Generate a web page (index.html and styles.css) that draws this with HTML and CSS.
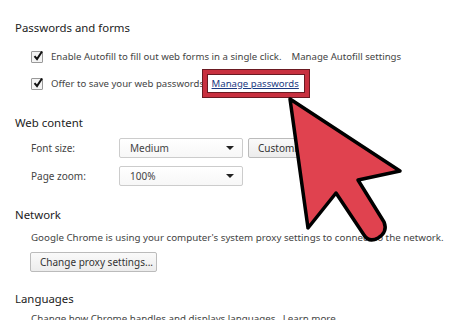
FILE: index.html
```html
<!DOCTYPE html>
<html>
<head>
<meta charset="utf-8">
<link rel="stylesheet" href="styles.css">
</head>
<body>
<div class="page">
  <section class="sec sec-pw">
    <h2>Passwords and forms</h2>
    <div class="row check-row">
      <span class="cb"><svg viewBox="0 0 12 12" width="12" height="12"><path d="M2.5 6.2 L5 9 L10 1.5" fill="none" stroke="#111" stroke-width="2"/></svg></span>
      <span>Enable Autofill to fill out web forms in a single click.</span>
      <span class="plain-link">Manage Autofill settings</span>
    </div>
    <div class="row check-row">
      <span class="cb"><svg viewBox="0 0 12 12" width="12" height="12"><path d="M2.5 6.2 L5 9 L10 1.5" fill="none" stroke="#111" stroke-width="2"/></svg></span>
      <span>Offer to save your web passwords.</span>
      <span class="hl"><a class="link">Manage passwords</a></span>
    </div>
  </section>

  <section class="sec sec-web">
    <h2>Web content</h2>
    <div class="row field-row">
      <span class="label">Font size:</span>
      <span class="select"><span>Medium</span><span class="caret"></span></span>
      <span class="btn btn-cust">Customize fonts...</span>
    </div>
    <div class="row field-row">
      <span class="label">Page zoom:</span>
      <span class="select"><span>100%</span><span class="caret"></span></span>
    </div>
  </section>

  <section class="sec sec-net">
    <h2>Network</h2>
    <p class="desc">Google Chrome is using your computer's system proxy settings to connect to the network.</p>
    <span class="btn btn-proxy">Change proxy settings...</span>
  </section>

  <section class="sec sec-lang">
    <h2>Languages</h2>
    <p class="desc">Change how Chrome handles and displays languages. <span class="plain-link">Learn more</span></p>
  </section>

  <svg class="arrow" width="460" height="320" viewBox="0 0 460 320">
    <path d="M290 99 L400 171 L358 180 L384 222 Q388 232 378 238 Q369 243 364 235 L336 193 L308 228 Z" fill="#e0424f" stroke="#000" stroke-width="3.5" stroke-linejoin="round"/>
  </svg>
</div>
</body>
</html>
```
FILE: styles.css
```css
html, body {
  margin: 0;
  padding: 0;
  background: #fff;
}
.page {
  position: relative;
  width: 460px;
  height: 320px;
  overflow: hidden;
  font-family: "Noto Sans", "Open Sans", sans-serif;
  font-size: 10px;
  color: #444;
  padding: 18px 0 0 15px;
  box-sizing: border-box;
}
h2 {
  margin: 0;
  font-size: 11.4px;
  font-weight: normal;
  line-height: 20px;
  color: #222;
}
.sec-pw h2 { margin-bottom: 5px; }
.row {
  display: flex;
  align-items: center;
  padding-left: 16px;
}
.check-row {
  height: 27px;
  gap: 6px;
  font-size: 9.6px;
}
.cb {
  width: 10px;
  height: 10px;
  border: 1px solid #999;
  border-radius: 1px;
  background: #f4f4f4;
  position: relative;
  margin-right: 2px;
  flex: none;
}
.cb svg {
  position: absolute;
  left: 0;
  top: -2px;
}
.plain-link { margin-left: 4px; }
.hl {
  margin-left: -10px;
  padding: 3px 6px 3px 5px;
  border: 4px solid #c8303f;
  box-shadow: 0 0 0 1px #6a1a22, inset 0 0 0 1px #6a1a22;
  background: #fff;
}
.link {
  color: #1b3a82;
  text-decoration: underline;
}
.sec-web { margin-top: 16px; }
.sec-web h2 { margin-bottom: 1px; }
.field-row {
  height: 28px;
}
.label {
  width: 88px;
  flex: none;
}
.select {
  width: 124px;
  height: 20px;
  box-sizing: border-box;
  border: 1px solid #ccc;
  border-radius: 2px;
  display: flex;
  align-items: center;
  justify-content: space-between;
  padding: 0 8px 0 10px;
  background: linear-gradient(#fff, #f7f7f7);
}
.caret {
  width: 0;
  height: 0;
  border-left: 4px solid transparent;
  border-right: 4px solid transparent;
  border-top: 4px solid #222;
}
.btn {
  display: inline-flex;
  align-items: center;
  height: 20px;
  box-sizing: border-box;
  border: 1px solid #bbb;
  border-radius: 2px;
  background: linear-gradient(#fafafa, #ececec);
  padding: 0 9px;
  color: #333;
  white-space: nowrap;
}
.btn-cust { margin-left: 5px; }
.sec-net { margin-top: 15px; }
.desc {
  margin: 5px 0 0 16px;
  line-height: 16px;
  font-size: 9.75px;
  white-space: nowrap;
}
.btn-proxy {
  margin: 6px 0 0 15px;
  width: 127px;
}
.sec-lang { margin-top: 17px; }
.sec-lang .desc { margin-top: 2px; }
.sec-lang .plain-link { margin-left: 2px; }
.arrow {
  position: absolute;
  left: 0;
  top: 0;
  pointer-events: none;
}
```
